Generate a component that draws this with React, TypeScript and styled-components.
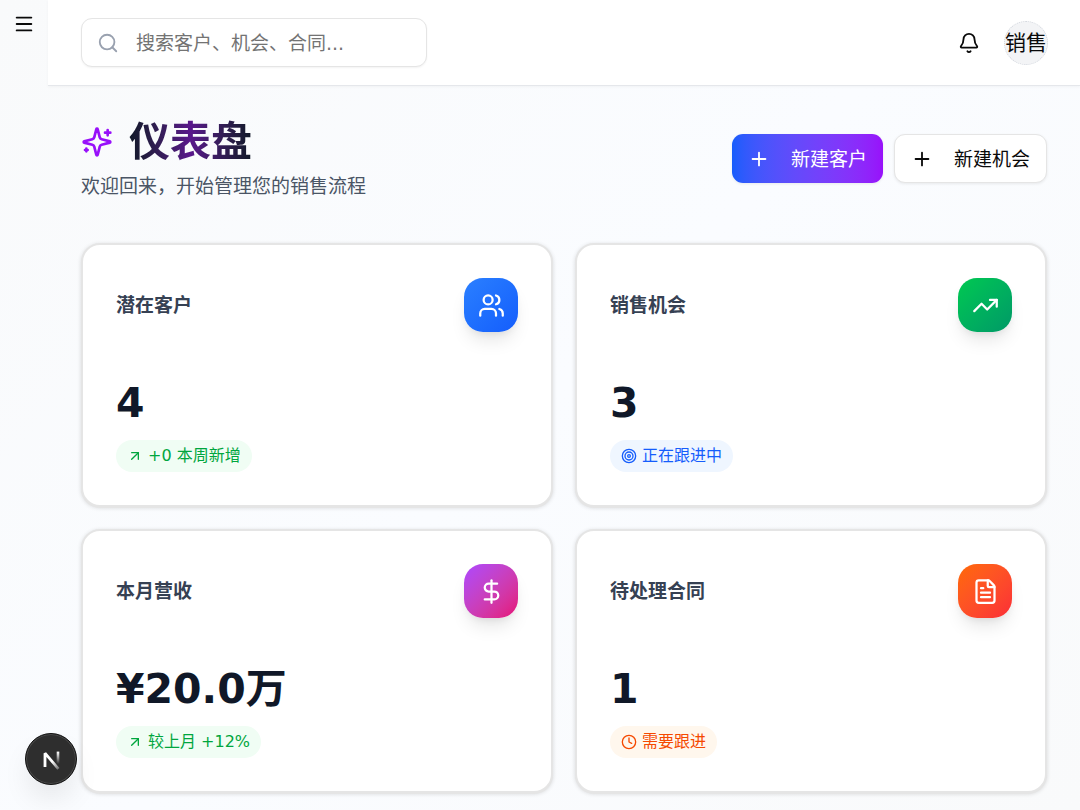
import React from "react";
import styled, { createGlobalStyle } from "styled-components";
import {
  ArrowUpRight,
  Bell,
  Clock,
  DollarSign,
  FileText,
  Menu,
  Plus,
  Search,
  Target,
  TrendingUp,
  Users,
  type LucideIcon,
} from "lucide-react";

const GlobalStyle = createGlobalStyle`
  *, *::before, *::after { box-sizing: border-box; }
  body {
    margin: 0;
    background: #f9fafb;
    color: #0a0a0a;
    font-family: "DejaVu Sans", "Noto Sans CJK SC", sans-serif;
    font-size: 19px;
    line-height: 28px;
  }
  button, input { font: inherit; color: inherit; }
  button { cursor: pointer; }
  h1, h2, p { margin: 0; }
`;

const Shell = styled.div`
  display: flex;
  min-height: 100vh;
  background: linear-gradient(135deg, #f9fafb, #fafcff 50%, #f9fafb);
`;

const Rail = styled.aside`
  flex: 0 0 48px;
`;

const MenuButton = styled.button`
  display: grid;
  place-items: center;
  width: 48px;
  height: 48px;
  padding: 0;
  border: 0;
  background: none;
`;

const Column = styled.div`
  flex: 1;
  min-width: 0;
`;

const TopBar = styled.header`
  display: flex;
  align-items: center;
  justify-content: space-between;
  height: 86px;
  padding: 0 32px 0 33px;
  background: #fff;
  border-bottom: 1px solid #e5e7eb;
  box-shadow: 0 1px 3px rgba(0, 0, 0, 0.04);
`;

const SearchBox = styled.label`
  display: flex;
  align-items: center;
  gap: 17px;
  width: 346px;
  height: 49px;
  padding: 0 15px;
  border: 1px solid #e5e5e5;
  border-radius: 11px;
  background: #fff;
  box-shadow: 0 1px 2px rgba(0, 0, 0, 0.05);
  color: #99a1af;
`;

const SearchInput = styled.input`
  flex: 1;
  min-width: 0;
  padding: 0;
  border: 0;
  outline: 0;
  background: none;
  color: #0a0a0a;
  &::placeholder { color: #737373; opacity: 1; }
`;

const TopActions = styled.div`
  display: flex;
  align-items: center;
  gap: 24px;
`;

const IconButton = styled.button`
  display: grid;
  place-items: center;
  padding: 0;
  border: 0;
  background: none;
`;

const Avatar = styled.button`
  display: grid;
  place-items: center;
  width: 44px;
  height: 44px;
  padding: 0;
  border: 1px dotted #d1d5dc;
  border-radius: 50%;
  background: #f3f4f6;
  font-size: 21px;
  white-space: nowrap;
`;

const Content = styled.main`
  padding: 31px 33px 16px;
`;

const PageHead = styled.div`
  display: flex;
  align-items: center;
  justify-content: space-between;
  margin-bottom: 43px;
`;

const TitleRow = styled.div`
  display: flex;
  align-items: center;
  gap: 16px;
  color: #9810fa;
`;

const Title = styled.h1`
  font-size: 41px;
  line-height: 50px;
  font-weight: 700;
  color: transparent;
  background: linear-gradient(90deg in oklab, #101828, #59168b 50%, #101828);
  background-clip: text;
  -webkit-background-clip: text;
`;

const Subtitle = styled.p`
  margin-top: 5px;
  color: #4a5565;
`;

const Actions = styled.div`
  display: flex;
  gap: 11px;
`;

const ActionButton = styled.button<{ $primary?: boolean }>`
  display: flex;
  align-items: center;
  gap: 21px;
  height: 49px;
  padding: 0 16px;
  border-radius: 11px;
  border: ${(p) => (p.$primary ? "0" : "1px solid #e5e5e5")};
  background: ${(p) => (p.$primary ? "linear-gradient(90deg in oklab, #155dfc, #9810fa)" : "#fff")};
  color: ${(p) => (p.$primary ? "#fff" : "#0a0a0a")};
  box-shadow: 0 1px 3px rgba(0, 0, 0, 0.08);
`;

const Cards = styled.section`
  display: grid;
  grid-template-columns: 1fr 1fr;
  gap: 22px;
`;

const Card = styled.article`
  padding: 33px;
  border: 2px solid #e5e5e5;
  border-radius: 19px;
  background: #fff;
  box-shadow: 0 1px 0 #e5e5e5, 0 1px 4px rgba(0, 0, 0, 0.14);
`;

const CardHead = styled.div`
  display: flex;
  align-items: center;
  justify-content: space-between;
  margin-bottom: 47px;
`;

const CardTitle = styled.h2`
  font-size: 19px;
  line-height: 28px;
  font-weight: 600;
  color: #364153;
`;

const Tile = styled.div<{ $from: string; $to: string }>`
  display: grid;
  place-items: center;
  width: 54px;
  height: 54px;
  border-radius: 19px;
  color: #fff;
  background: linear-gradient(135deg in oklab, ${(p) => p.$from}, ${(p) => p.$to});
  box-shadow: 0 12px 18px -4px rgba(0, 0, 0, 0.1), 0 4px 8px -4px rgba(0, 0, 0, 0.1);
`;

const Value = styled.p`
  margin-bottom: 13px;
  font-size: 41px;
  line-height: 48px;
  font-weight: 700;
  color: #101828;
`;

const Badge = styled.span<{ $color: string; $bg: string }>`
  display: flex;
  align-items: center;
  gap: 5px;
  width: max-content;
  height: 32px;
  padding: 0 11px;
  border-radius: 16px;
  font-size: 16px;
  line-height: 22px;
  color: ${(p) => p.$color};
  background: ${(p) => p.$bg};
`;

const DevButton = styled.button`
  position: fixed;
  left: 25px;
  bottom: 25px;
  display: grid;
  place-items: center;
  width: 52px;
  height: 52px;
  padding: 0;
  border: 1px solid #111;
  border-radius: 50%;
  background: #2e2e2e;
  box-shadow: inset 0 0 0 1px #4a4a4a, 0 16px 32px -8px rgba(0, 0, 0, 0.14);
`;

type Stat = {
  title: string;
  value: string;
  icon: LucideIcon;
  from: string;
  to: string;
  badge: string;
  badgeIcon: LucideIcon;
  color: string;
  bg: string;
};

const stats: Stat[] = [
  { title: "潜在客户", value: "4", icon: Users, from: "#2b7fff", to: "#155dfc", badge: "+0 本周新增", badgeIcon: ArrowUpRight, color: "#00a63e", bg: "#f0fdf4" },
  { title: "销售机会", value: "3", icon: TrendingUp, from: "#00c950", to: "#009966", badge: "正在跟进中", badgeIcon: Target, color: "#155dfc", bg: "#eff6ff" },
  { title: "本月营收", value: "¥20.0万", icon: DollarSign, from: "#ad46ff", to: "#e60076", badge: "较上月 +12%", badgeIcon: ArrowUpRight, color: "#00a63e", bg: "#f0fdf4" },
  { title: "待处理合同", value: "1", icon: FileText, from: "#ff6900", to: "#fb2c36", badge: "需要跟进", badgeIcon: Clock, color: "#f54900", bg: "#fff7ed" },
];

function StatCard({ stat }: { stat: Stat }) {
  const Icon = stat.icon;
  const BadgeIcon = stat.badgeIcon;
  return (
    <Card>
      <CardHead>
        <CardTitle>{stat.title}</CardTitle>
        <Tile $from={stat.from} $to={stat.to}>
          <Icon size={27} />
        </Tile>
      </CardHead>
      <Value>{stat.value}</Value>
      <Badge $color={stat.color} $bg={stat.bg}>
        <BadgeIcon size={16} />
        {stat.badge}
      </Badge>
    </Card>
  );
}

function SparklesIcon() {
  return (
    <svg
      width="32"
      height="32"
      viewBox="0 0 24 24"
      fill="none"
      stroke="currentColor"
      strokeWidth="2"
      strokeLinecap="round"
      strokeLinejoin="round"
      aria-hidden="true"
    >
      <path d="M9.937 15.5A2 2 0 0 0 8.5 14.063l-6.135-1.582a.5.5 0 0 1 0-.962L8.5 9.936A2 2 0 0 0 9.937 8.5l1.582-6.135a.5.5 0 0 1 .963 0L14.063 8.5A2 2 0 0 0 15.5 9.937l6.135 1.581a.5.5 0 0 1 0 .964L15.5 14.063a2 2 0 0 0-1.437 1.437l-1.582 6.135a.5.5 0 0 1-.963 0z" />
      <path d="M20 3v4M22 5h-4M4 17v2M5 18H3" />
    </svg>
  );
}

function NextLogo() {
  return (
    <svg width="52" height="52" viewBox="0 0 52 52" fill="none" aria-hidden="true">
      <defs>
        <linearGradient id="stem" x1="32" y1="18" x2="32" y2="30" gradientUnits="userSpaceOnUse">
          <stop stopColor="#fff" />
          <stop offset="1" stopColor="#fff" stopOpacity="0" />
        </linearGradient>
        <linearGradient id="diagonal" x1="27" y1="27" x2="34" y2="36" gradientUnits="userSpaceOnUse">
          <stop stopColor="#fff" />
          <stop offset="1" stopColor="#fff" stopOpacity="0.2" />
        </linearGradient>
      </defs>
      <path d="M19 33V19.2L32.4 34.8" stroke="url(#diagonal)" strokeWidth="2.8" strokeLinejoin="bevel" />
      <path d="M32 17.6v13" stroke="url(#stem)" strokeWidth="2.6" />
    </svg>
  );
}

export default function App() {
  return (
    <>
      <GlobalStyle />
      <Shell>
        <Rail>
          <MenuButton aria-label="菜单">
            <Menu size={22} />
          </MenuButton>
        </Rail>
        <Column>
          <TopBar>
            <SearchBox>
              <Search size={22} />
              <SearchInput type="search" aria-label="搜索" placeholder="搜索客户、机会、合同..." />
            </SearchBox>
            <TopActions>
              <IconButton aria-label="通知">
                <Bell size={22} />
              </IconButton>
              <Avatar>销售</Avatar>
            </TopActions>
          </TopBar>
          <Content>
            <PageHead>
              <div>
                <TitleRow>
                  <SparklesIcon />
                  <Title>仪表盘</Title>
                </TitleRow>
                <Subtitle>欢迎回来，开始管理您的销售流程</Subtitle>
              </div>
              <Actions>
                <ActionButton $primary>
                  <Plus size={22} />
                  新建客户
                </ActionButton>
                <ActionButton>
                  <Plus size={22} />
                  新建机会
                </ActionButton>
              </Actions>
            </PageHead>
            <Cards>
              {stats.map((stat) => (
                <StatCard key={stat.title} stat={stat} />
              ))}
            </Cards>
          </Content>
        </Column>
      </Shell>
      <DevButton aria-label="开发工具">
        <NextLogo />
      </DevButton>
    </>
  );
}
